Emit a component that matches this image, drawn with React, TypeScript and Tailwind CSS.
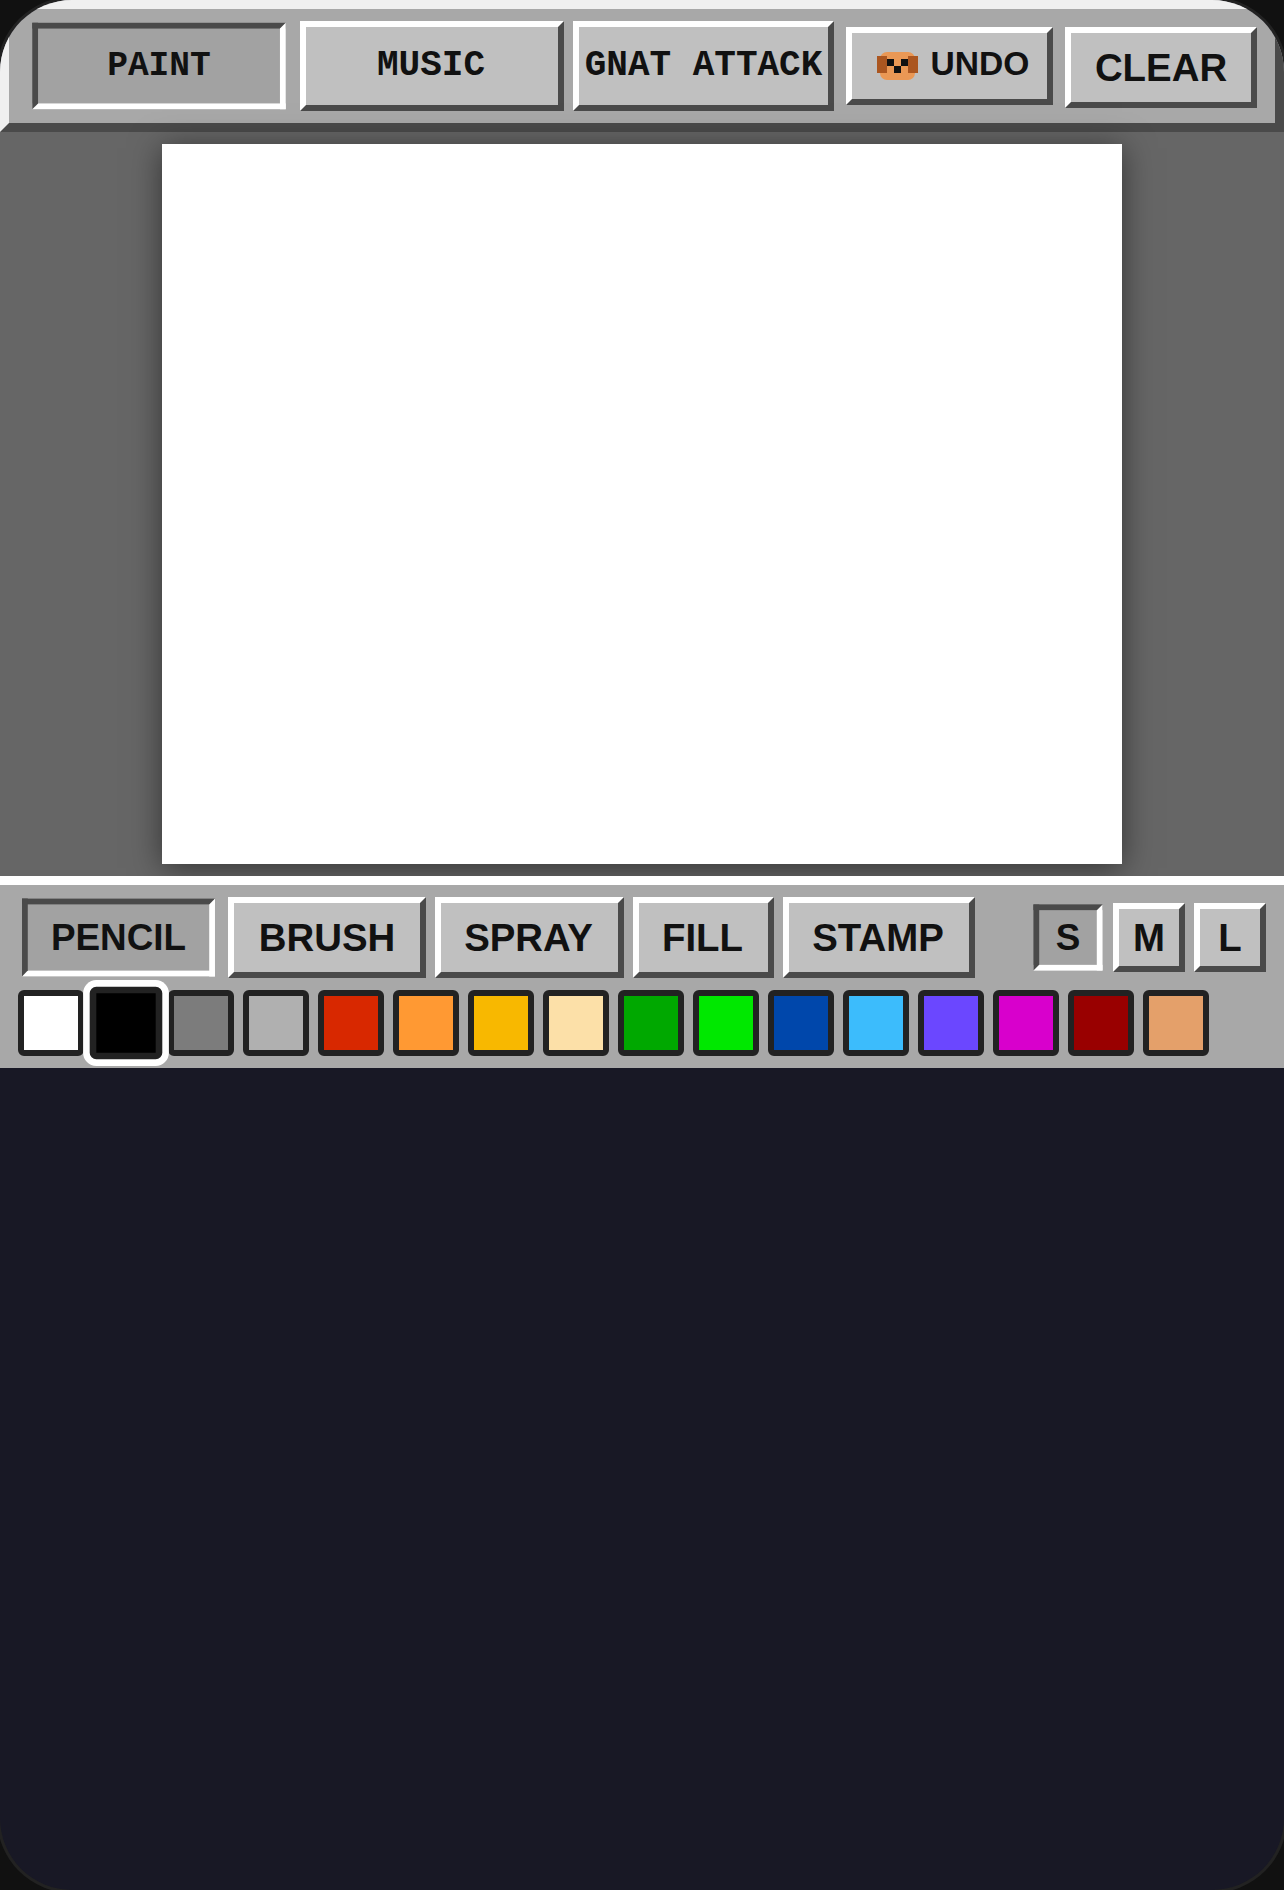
import clsx from "clsx";

const colors = [
  "#ffffff", "#000000", "#7c7c7c", "#b0b0b0", "#d82800", "#ff9933", "#f8b800", "#fce0a8",
  "#00a800", "#00e800", "#0047ab", "#3cbcfc", "#6b47ff", "#d800cc", "#990000", "#e4a06a",
];

const tools = [
  { label: "PENCIL", width: "w-[201px]", active: true },
  { label: "BRUSH", width: "w-[198px]", active: false },
  { label: "SPRAY", width: "w-[189px] pr-0.5", active: false },
  { label: "FILL", width: "w-[141px] pr-0.5", active: false },
  { label: "STAMP", width: "w-[192px] pr-0.5", active: false },
];

function bevel(active: boolean) {
  return active
    ? "border-t-[#4a4a4a] border-l-[#4a4a4a] border-b-white border-r-white bg-[#a2a2a2] scale-[0.96]"
    : "border-t-white border-l-white border-b-[#4a4a4a] border-r-[#4a4a4a] bg-[#c0c0c0]";
}

function TabButton({ label, width, active }: { label: string; width: string; active?: boolean }) {
  return (
    <button
      className={clsx(
        "h-[90px] border-[6px] pb-px text-[36px] font-bold text-[#111] font-['Liberation_Mono',monospace] whitespace-pre",
        width,
        bevel(!!active),
      )}
    >
      {label}
    </button>
  );
}

function DogIcon() {
  return (
    <svg width="41" height="28" viewBox="0 0 41 28" className="mt-[3px] shrink-0">
      <rect x="3" y="0" width="35" height="28" rx="7" fill="#ea9855" />
      <rect x="0" y="4" width="10" height="17" fill="#ab5620" />
      <rect x="31" y="4" width="10" height="17" fill="#ab5620" />
      <rect x="10" y="7" width="7" height="7" fill="#111" />
      <rect x="24" y="7" width="7" height="7" fill="#111" />
      <rect x="17" y="14" width="7" height="7" fill="#111" />
    </svg>
  );
}

export default function App() {
  return (
    <div className="h-[1890px] w-full overflow-hidden bg-[#111]">
      <div className="flex h-full flex-col overflow-hidden rounded-[72px] bg-[#181825] shadow-[0_0_0_3px_#222] font-['Liberation_Sans',sans-serif]">
        {/* top tabs */}
        <div className="flex h-[132px] shrink-0 items-start gap-[9px] border-[9px] border-t-[#f0f0f0] border-l-[#f0f0f0] border-b-[#4a4a4a] border-r-[#4a4a4a] bg-[#a8a8a8] pl-[18px] pt-3">
          <TabButton label="PAINT" width="w-[264px]" active />
          <TabButton label="MUSIC" width="w-[264px] pr-0.5" />
          <TabButton label="GNAT ATTACK" width="w-[261px]" />
          <div className="ml-[3px] mt-1.5 flex items-start gap-3">
            <button
              className={clsx(
                "flex h-[78px] w-[207px] items-center justify-center gap-[13px] border-[6px] pb-1 pl-[7px] text-[33.6px] font-bold text-[#111]",
                bevel(false),
              )}
            >
              <DogIcon />
              UNDO
            </button>
            <button className={clsx("h-[81px] w-[192px] border-[6px] text-[38.4px] font-bold text-[#111]", bevel(false))}>
              CLEAR
            </button>
          </div>
        </div>

        {/* canvas */}
        <div className="flex h-[744px] shrink-0 justify-center bg-[#666] py-3">
          <div className="h-[720px] w-[960px] bg-white shadow-[0_4px_30px_rgba(0,0,0,0.5)]" />
        </div>

        {/* tool panel */}
        <div className="flex h-[192px] shrink-0 flex-col gap-3 border-t-[9px] border-white bg-[#a8a8a8] px-[18px] py-3">
          <div className="flex h-[81px] items-center gap-[9px]">
            {tools.map((tool) => (
              <button
                key={tool.label}
                className={clsx(
                  "h-[81px] border-[6px] text-[38.4px] font-bold text-[#111]",
                  tool.width,
                  bevel(tool.active),
                )}
              >
                {tool.label}
              </button>
            ))}
            <div className="ml-auto flex items-center gap-[9px]">
              {["S", "M", "L"].map((size) => (
                <button
                  key={size}
                  className={clsx(
                    "h-[69px] w-[72px] border-[6px] text-[38.4px] font-bold text-[#111]",
                    bevel(size === "S"),
                  )}
                >
                  {size}
                </button>
              ))}
            </div>
          </div>
          <div className="flex gap-[9px]">
            {colors.map((color, i) => (
              <div
                key={color}
                style={{ backgroundColor: color }}
                className={clsx(
                  "h-[66px] w-[66px] rounded-[6px] border-[6px] border-[#222]",
                  i === 1 && "relative z-10 scale-110 shadow-[0_0_0_6px_#fff]",
                )}
              />
            ))}
          </div>
        </div>
      </div>
    </div>
  );
}
